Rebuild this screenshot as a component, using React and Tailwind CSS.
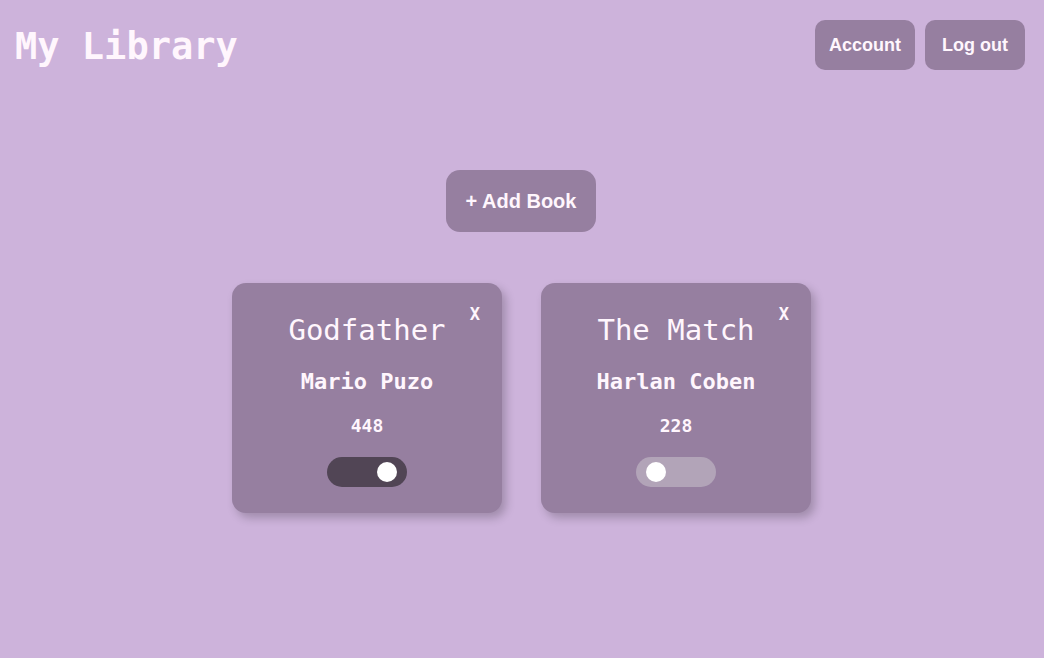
import React, { useState } from 'react';

const mono = "font-['DejaVu_Sans_Mono','Liberation_Mono',monospace]";
const sans = "font-['Liberation_Sans',Arial,sans-serif]";

const books = [
  { id: 1, title: 'Godfather', author: 'Mario Puzo', pages: 448, read: true },
  { id: 2, title: 'The Match', author: 'Harlan Coben', pages: 228, read: false },
];

const Toggle = ({ on, onClick }) => (
  <button
    onClick={onClick}
    className={`w-[80px] h-[30px] rounded-full flex items-center px-[10px] ${on ? 'bg-[#514555] justify-end' : 'bg-[#b2a4b8] justify-start'}`}
  >
    <span className="w-[20px] h-[20px] rounded-full bg-white block" />
  </button>
);

const BookCard = ({ book, onToggle }) => (
  <div className="relative w-[270px] h-[230px] rounded-[14px] bg-[#967fa0] shadow-[4px_5px_10px_rgba(0,0,0,0.22)] flex flex-col items-center pt-[30px] text-[#fff6fd]">
    <button className={`${mono} absolute top-[21px] right-[22px] text-[17px] leading-[20px] font-bold text-[#fff6fd]`}>X</button>
    <h2 className={`${mono} text-[29px] leading-[34px]`}>{book.title}</h2>
    <h3 className={`${mono} mt-[21px] text-[22px] leading-[27px] font-bold`}>{book.author}</h3>
    <p className={`${mono} mt-[20px] text-[18px] leading-[21px] font-bold`}>{book.pages}</p>
    <div className="mt-[21px]">
      <Toggle on={book.read} onClick={onToggle} />
    </div>
  </div>
);

export default function App() {
  const [list, setList] = useState(books);

  const toggle = (id) =>
    setList(list.map((b) => (b.id === id ? { ...b, read: !b.read } : b)));

  return (
    <div className="min-h-[658px] w-full bg-[#cdb3db] text-[#fff6fd]">
      <header className="flex justify-between items-start pt-5 pl-[15px] pr-[19px]">
        <h1 className={`${mono} mt-[4px] text-[37px] leading-[45px] font-bold`}>My Library</h1>
        <div className={`${sans} flex gap-[10px]`}>
          <button className="w-[100px] h-[50px] rounded-[10px] bg-[#967fa0] text-[18px] font-bold">Account</button>
          <button className="w-[100px] h-[50px] rounded-[10px] bg-[#967fa0] text-[18px] font-bold">Log out</button>
        </div>
      </header>

      <div className="flex justify-center mt-[100px]">
        <button className={`${sans} mr-[2px] w-[150px] h-[62px] rounded-[14px] bg-[#967fa0] text-[20px] font-bold`}>+ Add Book</button>
      </div>

      <div className="flex justify-center gap-[39px] mt-[51px] pr-[1px]">
        {list.map((b) => (
          <BookCard key={b.id} book={b} onToggle={() => toggle(b.id)} />
        ))}
      </div>
    </div>
  );
}
